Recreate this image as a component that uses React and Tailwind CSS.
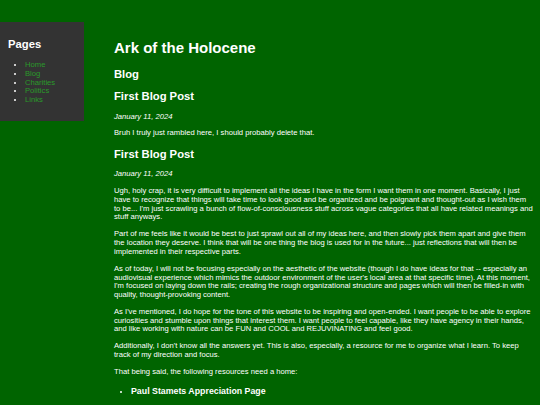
import React from 'react';

const pages = ['Home', 'Blog', 'Charities', 'Politics', 'Links'];

const paragraphs = [
  "Ugh, holy crap, it is very difficult to implement all the ideas I have in the form I want them in one moment. Basically, I just have to recognize that things will take time to look good and be organized and be poignant and thought-out as I wish them to be... I'm just scrawling a bunch of flow-of-consciousness stuff across vague categories that all have related meanings and stuff anyways.",
  'Part of me feels like it would be best to just sprawl out all of my ideas here, and then slowly pick them apart and give them the location they deserve. I think that will be one thing the blog is used for in the future... just reflections that will then be implemented in their respective parts.',
  "As of today, I will not be focusing especially on the aesthetic of the website (though I do have ideas for that -- especially an audiovisual experience which mimics the outdoor environment of the user's local area at that specific time). At this moment, I'm focused on laying down the rails; creating the rough organizational structure and pages which will then be filled-in with quality, thought-provoking content.",
  "As I've mentioned, I do hope for the tone of this website to be inspiring and open-ended. I want people to be able to explore curiosities and stumble upon things that interest them. I want people to feel capable, like they have agency in their hands, and like working with nature can be FUN and COOL and REJUVINATING and feel good.",
  "Additionally, I don't know all the answers yet. This is also, especially, a resource for me to organize what I learn. To keep track of my direction and focus.",
  'That being said, the following resources need a home:',
];

function PostTitle({ children }) {
  return <h2 className="text-[11.25px] leading-[13px] font-bold text-white my-[9.5px]">{children}</h2>;
}

function PostDate() {
  return <p className="italic my-[8.2px]">January 11, 2024</p>;
}

export default function App() {
  return (
    <div
      className="min-h-screen bg-[#006400] text-white text-[7.65px] leading-[8.75px] flex"
      style={{ fontFamily: '"Liberation Sans", Arial, sans-serif' }}
    >
      {/* Sidebar */}
      <aside className="w-[84px] shrink-0 self-start mt-[22px] bg-[#333333] px-[8px] pt-[16px] pb-[16px]">
        <h2 className="text-[11.25px] leading-[13px] font-bold text-white">Pages</h2>
        <ul className="list-disc pl-[17px] mt-[10px]">
          {pages.map(p => (
            <li key={p}>
              <a href="#" className="text-[#2a9a2a]">{p}</a>
            </li>
          ))}
        </ul>
      </aside>

      {/* Main content */}
      <main className="ml-[30px] w-[419px] shrink-0 pt-[39px]">
        <h1 className="text-[15px] leading-[17.5px] font-bold text-white mb-[11px]">Ark of the Holocene</h1>
        <PostTitle>Blog</PostTitle>

        <PostTitle>First Blog Post</PostTitle>
        <PostDate />
        <p className="my-[8.2px]">Bruh I truly just rambled here, I should probably delete that.</p>

        <PostTitle>First Blog Post</PostTitle>
        <PostDate />
        {paragraphs.map((t, i) => (
          <p key={i} className="my-[8.2px]">{t}</p>
        ))}

        <ul className="list-disc pl-[17px]">
          <li>
            <h3 className="text-[8.8px] leading-[10.2px] font-bold text-white my-[9px]">
              Paul Stamets Appreciation Page
            </h3>
            <ul className="list-disc pl-[4px]">
              <li>Mention Paul's book 'Mycelium Running' and his online talks</li>
            </ul>
          </li>
        </ul>
      </main>
    </div>
  );
}
